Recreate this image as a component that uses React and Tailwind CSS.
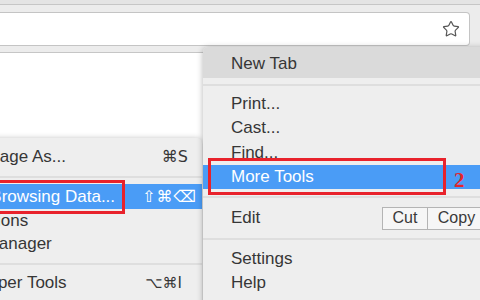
import { Star } from 'lucide-react'

/* Chrome menu > More Tools > Clear Browsing Data, con las marcas rojas del tutorial */

const sans = { fontFamily: '"Liberation Sans", Arial, sans-serif' }
const glyph = { fontFamily: '"DejaVu Sans", sans-serif' }

function Row({ children, className = '' }) {
  return <div className={`flex h-[24.5px] items-center pl-[28px] ${className}`}>{children}</div>
}

function Sep({ h }) {
  return (
    <div className={`flex items-center ${h}`}>
      <div className="h-[2px] w-full bg-[#dedede]" />
    </div>
  )
}

function MainMenu() {
  return (
    <div className="absolute left-[203px] top-[47px] h-[260px] w-[290px] rounded-tl-[5px] bg-[#eeeeee] text-[17px] text-[#363636] shadow-[0_1px_6px_rgba(0,0,0,0.3)]">
      <div className="flex h-[31px] items-center rounded-tl-[5px] bg-[#dadada] pl-[28px] pt-[2px]">New Tab</div>
      <Sep h="h-[13px]" />
      <Row>Print...</Row>
      <Row>Cast...</Row>
      <Row>Find...</Row>
      <Row className="bg-[#4a9cf6] text-white">More Tools</Row>
      <Sep h="h-[16px]" />
      <div className="flex h-[26px] items-center pl-[28px]">
        <span className="flex-1">Edit</span>
        <div className="mr-[7px] flex h-[23px] text-[16px] text-[#3a3a3a]">
          <div className="flex w-[46px] items-center justify-center border border-[#b4b4b4] bg-[#f6f6f6]">Cut</div>
          <div className="flex w-[58px] items-center justify-center border border-l-0 border-[#b4b4b4] bg-[#f6f6f6]">Copy</div>
        </div>
      </div>
      <Sep h="h-[15px]" />
      <Row>Settings</Row>
      <Row>Help</Row>
    </div>
  )
}

function SubMenu() {
  return (
    <div className="absolute left-[-80px] top-[138px] h-[170px] w-[282px] rounded-tr-[5px] rounded-br-[5px] bg-[#eeeeee] pt-[7px] text-[17px] text-[#363636] shadow-[0_1px_6px_rgba(0,0,0,0.3)]">
      <div className="flex h-[24px] items-center justify-between pl-[25px] pr-[14px]">
        <span>Save Page As...</span>
        <span style={glyph} className="text-[16px]">⌘S</span>
      </div>
      <Sep h="h-[15px]" />
      <div className="flex h-[25px] items-center justify-between bg-[#4a9cf6] pl-[25px] pr-[5px] text-white">
        <span>Clear Browsing Data...</span>
        <span style={glyph} className="text-[16px] tracking-[1px]">⇧⌘⌫</span>
      </div>
      <div className="flex h-[23px] items-center pl-[25px]">Extensions</div>
      <div className="flex h-[24px] items-center pl-[25px]">Task Manager</div>
      <Sep h="h-[15px]" />
      <div className="flex h-[24px] items-center justify-between pl-[25px] pr-[20px]">
        <span>Developer Tools</span>
        <span style={glyph} className="text-[15px]">⌥⌘I</span>
      </div>
    </div>
  )
}

export default function App() {
  return (
    <div style={sans} className="relative h-[300px] w-[480px] overflow-hidden bg-white">
      {/* barra de herramientas */}
      <div className="h-[4px] bg-[#e4e4e4]" />
      <div className="h-[49px] border-t border-b border-[#c6c6c6] bg-[#ececec] pt-[7px]">
        <div className="flex h-[34px] w-[470px] items-center justify-end rounded-r-[4px] border border-l-0 border-[#c4c4c4] bg-white pr-[9px]">
          <Star size={18} strokeWidth={1.6} className="text-[#555]" />
        </div>
      </div>
      <div className="h-[247px] bg-white" />

      <SubMenu />
      <MainMenu />

      {/* marcas rojas */}
      <div className="absolute left-[-10px] top-[180px] h-[34px] w-[135px] border-[3px] border-[#e8222b]" />
      <div className="absolute left-[208px] top-[158px] h-[37px] w-[238px] border-[3px] border-[#e8222b]" />
      <div className="absolute left-[454px] top-[165px] text-[21px] font-bold text-[#e3262e]" style={{ fontFamily: '"Liberation Serif", serif' }}>2</div>
    </div>
  )
}
